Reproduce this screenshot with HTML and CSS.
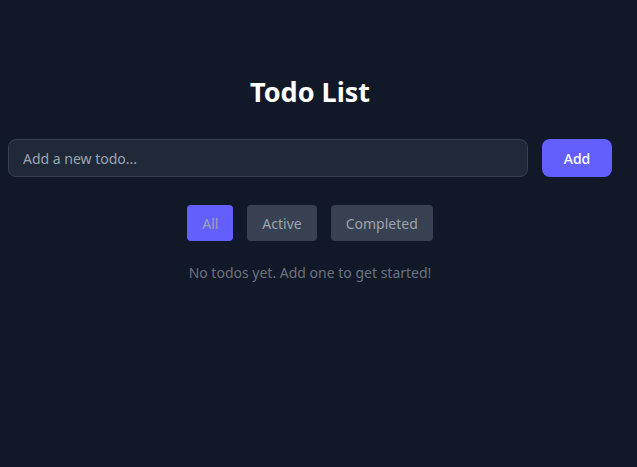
FILE: index.html
```html
<!DOCTYPE html>
<html lang="en">
<head>
<meta charset="utf-8">
<title>Todo List</title>
<link rel="stylesheet" href="styles.css">
</head>
<body>
<main class="app">
  <h1 class="title">Todo List</h1>
  <form class="add-form">
    <input class="add-input" type="text" placeholder="Add a new todo...">
    <button class="add-btn" type="button">Add</button>
  </form>
  <div class="filters">
    <button class="filter filter-active" type="button">All</button>
    <button class="filter" type="button">Active</button>
    <button class="filter" type="button">Completed</button>
  </div>
  <p class="empty">No todos yet. Add one to get started!</p>
</main>
</body>
</html>
```
FILE: styles.css
```css
html, body {
  margin: 0;
  padding: 0;
  background: #111827;
  height: 100%;
}
body {
  font-family: "Noto Sans", "Open Sans", sans-serif;
  color: #f9fafb;
}
.app {
  width: 604px;
  margin-left: 8px;
  padding-top: 74px;
  box-sizing: border-box;
}
.title {
  margin: 0;
  font-size: 27px;
  line-height: 36px;
  font-weight: 700;
  text-align: center;
  color: #ffffff;
}
.add-form {
  display: flex;
  gap: 14px;
  margin-top: 29px;
}
.add-input {
  flex: 1;
  height: 38px;
  box-sizing: border-box;
  background: #1f2937;
  border: 1px solid #374151;
  border-radius: 8px;
  padding: 0 14px;
  font-family: inherit;
  font-size: 14px;
  color: #e5e7eb;
  outline: none;
}
.add-input::placeholder {
  color: #9ca3af;
}
.add-btn {
  width: 70px;
  height: 38px;
  background: #635fff;
  border: none;
  border-radius: 8px;
  color: #ffffff;
  font-family: inherit;
  font-size: 14px;
  font-weight: 500;
}
.filters {
  display: flex;
  justify-content: center;
  gap: 14px;
  margin-top: 28px;
}
.filter {
  height: 36px;
  padding: 0 15px;
  background: #374151;
  border: none;
  border-radius: 4px;
  color: #9ca3af;
  font-family: inherit;
  font-size: 14px;
}
.filter-active {
  background: #635fff;
}
.empty {
  margin: 22px 0 0;
  text-align: center;
  font-size: 14px;
  line-height: 20px;
  color: #6b7280;
}
```
